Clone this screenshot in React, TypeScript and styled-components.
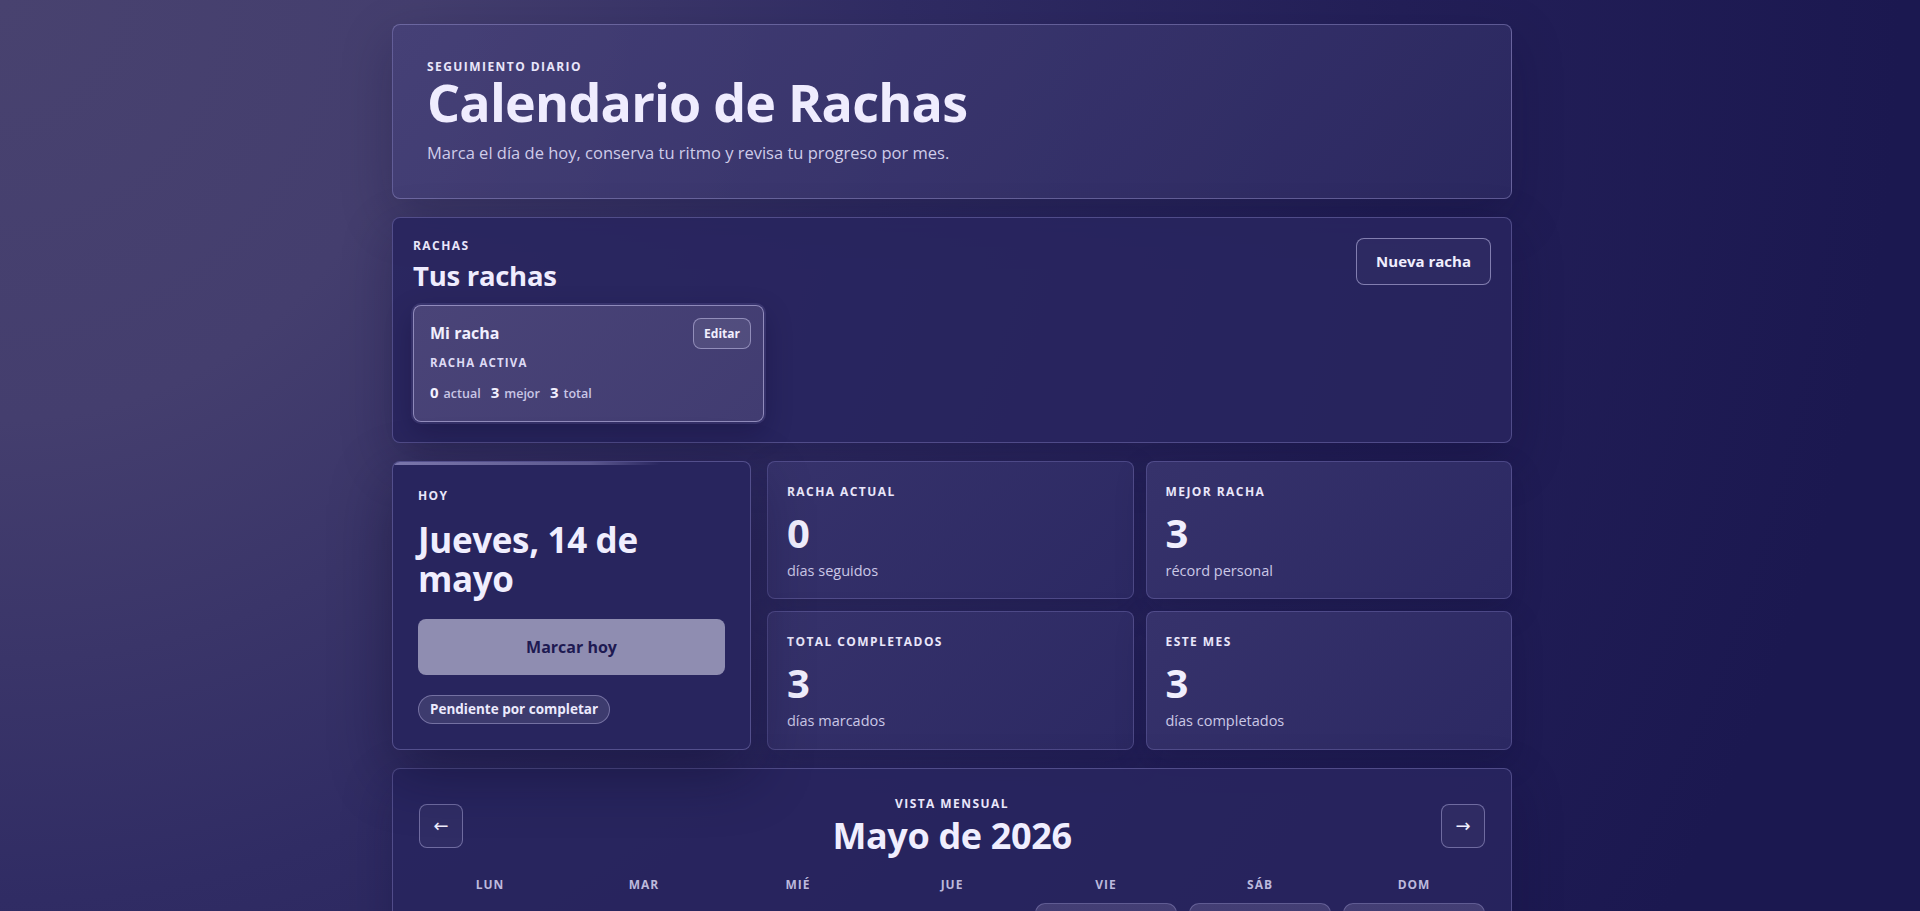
import styled, { createGlobalStyle } from "styled-components";

const GlobalStyle = createGlobalStyle`
  html {
    scrollbar-color: #8e8cb0 #2d2d2d;
  }
  body {
    margin: 0;
    /* keeps the layout centred as with the 16px classic scrollbar */
    padding-right: 16px;
    min-height: 100vh;
    font-family: "Open Sans", "Noto Sans", sans-serif;
    color: #eeebfd;
    background-color: #1b1850;
    background-image: radial-gradient(
      circle at 0 0,
      #48426f 0px,
      #443e6e 420px,
      #302c64 900px,
      #231f58 1400px,
      #1b1850 1900px
    );
    background-attachment: fixed;
  }
  * {
    box-sizing: border-box;
  }
`;

const Page = styled.main`
  max-width: 1120px;
  margin: 0 auto;
  padding: 24px 0 48px;
  display: flex;
  flex-direction: column;
  gap: 18px;
`;

const Eyebrow = styled.p`
  margin: 0;
  font-size: 12px;
  line-height: 16px;
  font-weight: 700;
  letter-spacing: 0.12em;
  text-transform: uppercase;
  color: #e9e6fa;
`;

const Hero = styled.header`
  padding: 34px 34px 33px;
  border: 1px solid rgba(176, 170, 232, 0.38);
  border-radius: 8px;
  background: linear-gradient(
    135deg,
    rgba(70, 65, 120, 0.8),
    rgba(46, 43, 99, 0.8)
  );
  box-shadow: 0 18px 50px rgba(12, 10, 45, 0.25);
`;

const HeroTitle = styled.h1`
  margin: 0;
  font-size: 52px;
  line-height: 1.05;
  font-weight: 700;
  letter-spacing: -0.015em;
  color: #efecfe;
`;

const HeroText = styled.p`
  margin: 11px 0 0;
  font-size: 16.5px;
  line-height: 24px;
  color: #cfcce9;
`;

const Panel = styled.section`
  padding: 20px;
  border: 1px solid rgba(160, 154, 222, 0.34);
  border-radius: 8px;
  background: rgba(40, 37, 94, 0.9);
  box-shadow: 0 18px 50px rgba(12, 10, 45, 0.3);
`;

const PanelHead = styled.div`
  display: flex;
  justify-content: space-between;
  align-items: flex-start;
`;

const PanelTitle = styled.h2`
  margin: 5px 0 0;
  font-size: 27.5px;
  line-height: 1.2;
  font-weight: 700;
  letter-spacing: -0.01em;
  color: #efecfe;
`;

const GhostButton = styled.button`
  height: 47px;
  padding: 0 19px;
  border: 1px solid rgba(200, 196, 240, 0.55);
  border-radius: 8px;
  background: rgba(255, 255, 255, 0.03);
  color: #f0eefe;
  font-family: inherit;
  font-size: 15px;
  font-weight: 700;
  cursor: pointer;
`;

const StreakList = styled.div`
  display: grid;
  grid-template-columns: repeat(auto-fill, 351px);
  gap: 14px;
  margin-top: 13px;
`;

const StreakCard = styled.article`
  height: 117px;
  padding: 12px 12px 19px 16px;
  border: 1px solid rgba(205, 200, 245, 0.55);
  border-radius: 8px;
  background: linear-gradient(135deg, #4a4478, #413c71);
  box-shadow: 0 0 0 2px rgba(140, 134, 200, 0.18),
    0 10px 28px rgba(10, 8, 40, 0.3);
`;

const StreakTop = styled.div`
  display: flex;
  justify-content: space-between;
  align-items: center;
  height: 31px;
`;

const StreakName = styled.h3`
  margin: 0;
  font-size: 16px;
  font-weight: 700;
  color: #f1effe;
`;

const SmallButton = styled.button`
  height: 31px;
  padding: 0 10px;
  border: 1px solid rgba(210, 206, 245, 0.5);
  border-radius: 8px;
  background: rgba(255, 255, 255, 0.08);
  color: #f1effe;
  font-family: inherit;
  font-size: 12px;
  font-weight: 700;
  cursor: pointer;
`;

const StreakStatus = styled(Eyebrow)`
  margin-top: 6px;
  font-size: 11.5px;
  letter-spacing: 0.1em;
  color: #dedbf5;
`;

const StreakStats = styled.div`
  display: flex;
  align-items: baseline;
  gap: 10px;
  margin-top: 11px;
  line-height: 20px;
`;

const StreakStat = styled.span`
  display: inline-flex;
  align-items: baseline;
  gap: 5px;
  font-size: 15px;
  font-weight: 700;
  color: #f3f1ff;

  small {
    font-size: 12.5px;
    font-weight: 600;
    color: #c9c6e6;
  }
`;

const Dashboard = styled.div`
  display: grid;
  grid-template-columns: 359px 1fr;
  gap: 16px;
`;

const TodayCard = styled.section`
  position: relative;
  overflow: hidden;
  padding: 26px 25px 25px;
  border: 1px solid rgba(160, 154, 222, 0.36);
  border-radius: 8px;
  background: #28255e;
  box-shadow: 0 22px 60px rgba(10, 8, 40, 0.45);

  &::before {
    content: "";
    position: absolute;
    top: 0;
    left: 0;
    right: 0;
    height: 3px;
    background: linear-gradient(
      90deg,
      rgba(190, 185, 235, 0.55),
      rgba(190, 185, 235, 0.35) 55%,
      rgba(190, 185, 235, 0) 75%
    );
  }
`;

const TodayDate = styled.h2`
  margin: 16px 0 0;
  font-size: 35px;
  line-height: 1.12;
  font-weight: 700;
  letter-spacing: -0.01em;
  color: #f0eefe;
`;

const MarkButton = styled.button`
  display: block;
  width: 100%;
  height: 56px;
  margin-top: 21px;
  border: 0;
  border-radius: 8px;
  background: #8f8db1;
  color: #1e1a52;
  font-family: inherit;
  font-size: 16px;
  font-weight: 700;
  cursor: pointer;
`;

const Pill = styled.span`
  display: flex;
  align-items: center;
  width: fit-content;
  height: 29px;
  margin-top: 20px;
  padding: 0 11px;
  border: 1px solid rgba(200, 196, 240, 0.4);
  border-radius: 999px;
  background: rgba(255, 255, 255, 0.1);
  color: #eceafd;
  font-size: 13.5px;
  font-weight: 700;
`;

const StatsGrid = styled.div`
  display: grid;
  grid-template-columns: 1fr 1fr;
  grid-template-rows: 1fr 1fr;
  gap: 12px;
`;

const StatCard = styled.div`
  padding: 22px 19px 15px;
  border: 1px solid rgba(150, 144, 215, 0.3);
  border-radius: 8px;
  background: linear-gradient(135deg, #36326b, #2c2963);
  box-shadow: 0 12px 32px rgba(10, 8, 40, 0.2);
`;

const StatValue = styled.p`
  margin: 11px 0 0;
  font-size: 40px;
  line-height: 44px;
  font-weight: 700;
  color: #f1effe;
`;

const StatNote = styled.p`
  margin: 5px 0 0;
  font-size: 14.5px;
  line-height: 22px;
  color: #cbc8e6;
`;

const Calendar = styled(Panel)`
  padding: 27px 26px 26px;
`;

const CalendarHead = styled.div`
  display: grid;
  grid-template-columns: 44px 1fr 44px;
  align-items: center;
`;

const MonthTitle = styled.div`
  text-align: center;
`;

const MonthName = styled.h2`
  margin: 4px 0 0;
  font-size: 36px;
  line-height: 1.1;
  font-weight: 700;
  letter-spacing: -0.01em;
  color: #f0eefe;
`;

const ArrowButton = styled.button`
  width: 44px;
  height: 44px;
  border: 1px solid rgba(190, 186, 235, 0.45);
  border-radius: 8px;
  background: rgba(255, 255, 255, 0.04);
  color: #f0eefe;
  font-family: "DejaVu Sans", sans-serif;
  font-size: 18px;
  cursor: pointer;
`;

const Week = styled.div`
  display: grid;
  grid-template-columns: repeat(7, 1fr);
  gap: 12px;
  margin-top: 21px;
`;

const WeekDay = styled.span`
  text-align: center;
  font-size: 12px;
  line-height: 16px;
  font-weight: 700;
  letter-spacing: 0.08em;
  color: #bcb9dc;
`;

const Days = styled.div`
  display: grid;
  grid-template-columns: repeat(7, 1fr);
  gap: 12px;
  margin-top: 10px;
`;

const DayCell = styled.div<{ $state: "empty" | "day" | "done" | "today" }>`
  aspect-ratio: 1 / 0.8;
  padding: 10px 12px;
  border-radius: 10px;
  border: 1px solid
    ${(p) =>
      p.$state === "empty"
        ? "transparent"
        : p.$state === "today"
        ? "rgba(220, 216, 255, 0.75)"
        : "rgba(190, 186, 240, 0.3)"};
  background: ${(p) =>
    p.$state === "empty"
      ? "transparent"
      : p.$state === "done"
      ? "linear-gradient(135deg, #8f8db1, #7a78a6)"
      : "linear-gradient(180deg, #433e74, #37336b)"};
  color: ${(p) => (p.$state === "done" ? "#1e1a52" : "#e8e6fb")};
  font-size: 15px;
  font-weight: 700;
`;

const Legend = styled.div`
  display: flex;
  justify-content: center;
  gap: 22px;
  margin-top: 22px;
  font-size: 13px;
  color: #cbc8e6;
`;

const LegendItem = styled.span<{ $swatch: string }>`
  display: inline-flex;
  align-items: center;
  gap: 8px;

  &::before {
    content: "";
    width: 12px;
    height: 12px;
    border-radius: 4px;
    background: ${(p) => p.$swatch};
  }
`;

const weekDays = ["LUN", "MAR", "MIÉ", "JUE", "VIE", "SÁB", "DOM"];
const completed = [10, 11, 12];
const today = 14;

const stats = [
  { label: "Racha actual", value: 0, note: "días seguidos" },
  { label: "Mejor racha", value: 3, note: "récord personal" },
  { label: "Total completados", value: 3, note: "días marcados" },
  { label: "Este mes", value: 3, note: "días completados" },
];

// mayo 2026 empieza en viernes
const cells: (number | null)[] = [
  null,
  null,
  null,
  null,
  ...Array.from({ length: 31 }, (_, i) => i + 1),
];

const App = () => {
  return (
    <>
      <GlobalStyle />
      <Page>
        <Hero>
          <Eyebrow>Seguimiento diario</Eyebrow>
          <HeroTitle>Calendario de Rachas</HeroTitle>
          <HeroText>
            Marca el día de hoy, conserva tu ritmo y revisa tu progreso por
            mes.
          </HeroText>
        </Hero>

        <Panel>
          <PanelHead>
            <div>
              <Eyebrow>Rachas</Eyebrow>
              <PanelTitle>Tus rachas</PanelTitle>
            </div>
            <GhostButton>Nueva racha</GhostButton>
          </PanelHead>
          <StreakList>
            <StreakCard>
              <StreakTop>
                <StreakName>Mi racha</StreakName>
                <SmallButton>Editar</SmallButton>
              </StreakTop>
              <StreakStatus>Racha activa</StreakStatus>
              <StreakStats>
                <StreakStat>
                  0 <small>actual</small>
                </StreakStat>
                <StreakStat>
                  3 <small>mejor</small>
                </StreakStat>
                <StreakStat>
                  3 <small>total</small>
                </StreakStat>
              </StreakStats>
            </StreakCard>
          </StreakList>
        </Panel>

        <Dashboard>
          <TodayCard>
            <Eyebrow>Hoy</Eyebrow>
            <TodayDate>Jueves, 14 de mayo</TodayDate>
            <MarkButton>Marcar hoy</MarkButton>
            <Pill>Pendiente por completar</Pill>
          </TodayCard>
          <StatsGrid>
            {stats.map((s) => (
              <StatCard key={s.label}>
                <Eyebrow>{s.label}</Eyebrow>
                <StatValue>{s.value}</StatValue>
                <StatNote>{s.note}</StatNote>
              </StatCard>
            ))}
          </StatsGrid>
        </Dashboard>

        <Calendar>
          <CalendarHead>
            <ArrowButton aria-label="Mes anterior">←</ArrowButton>
            <MonthTitle>
              <Eyebrow>Vista mensual</Eyebrow>
              <MonthName>Mayo de 2026</MonthName>
            </MonthTitle>
            <ArrowButton aria-label="Mes siguiente">→</ArrowButton>
          </CalendarHead>
          <Week>
            {weekDays.map((d) => (
              <WeekDay key={d}>{d}</WeekDay>
            ))}
          </Week>
          <Days>
            {cells.map((day, i) => (
              <DayCell
                key={i}
                $state={
                  day === null
                    ? "empty"
                    : day === today
                    ? "today"
                    : completed.includes(day)
                    ? "done"
                    : "day"
                }
              >
                {day}
              </DayCell>
            ))}
          </Days>
          <Legend>
            <LegendItem $swatch="#8f8db1">Completado</LegendItem>
            <LegendItem $swatch="#433e74">Pendiente</LegendItem>
          </Legend>
        </Calendar>
      </Page>
    </>
  );
};

export default App;
